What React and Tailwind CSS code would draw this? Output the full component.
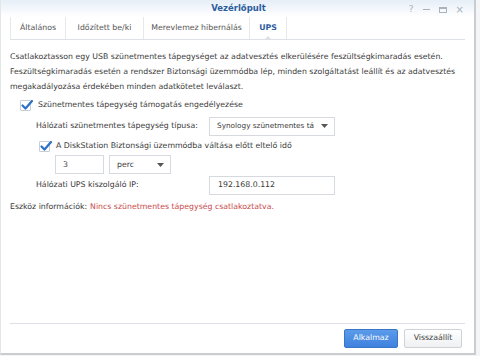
import React from 'react';

const font = { fontFamily: '"DejaVu Sans", Verdana, sans-serif' };

const Check = () => (
  <span className="w-[11px] h-[11px] border border-[#c8ced6] bg-white rounded-[1px] relative inline-block shrink-0">
    <svg className="absolute -left-[1px] -top-[3px]" width="14" height="14" viewBox="0 0 14 14">
      <path d="M2.5 7.5 L5.5 10.5 L12 3" fill="none" stroke="#2e6fc9" strokeWidth="2.2" strokeLinecap="round" strokeLinejoin="round" />
    </svg>
  </span>
);

const Caret = () => (
  <svg className="shrink-0" width="7" height="4" viewBox="0 0 7 4"><path d="M0 0 H7 L3.5 4 Z" fill="#555" /></svg>
);

const App = () => {
  return (
    <div className="w-[480px] h-[356px] bg-[#f4f5f6] text-[7.8px] text-[#3a3a3a] whitespace-nowrap" style={font}>
      <div className="w-[476px] h-[355px] bg-white border-r-2 border-b-2 border-[#c9ccd0] border-l border-l-[#e4e6e8] flex flex-col">
        {/* title bar */}
        <div className="h-[17px] bg-gradient-to-b from-[#e6eef7] to-white relative flex items-center justify-center">
          <span className="text-[#2c5c9e] font-bold text-[8.5px] ml-[2px]">Vezérlőpult</span>
          <div className="absolute right-[10px] top-[3px] flex items-center gap-[9px] text-[#a9b2bd]">
            <span className="text-[9px]">?</span>
            <span className="w-[7px] h-[1px] bg-[#a9b2bd]"></span>
            <span className="w-[8px] h-[6px] border border-[#a9b2bd] border-t-2"></span>
            <span className="text-[10px] leading-none">×</span>
          </div>
        </div>

        {/* tabs */}
        <div className="mx-[9px] h-[23px] border-b border-[#dde1e5] flex items-stretch text-[#555] relative">
          <div className="w-[55px] border-l border-[#e6e9ec] flex items-center justify-center">Általános</div>
          <div className="w-[78px] border-l border-[#e6e9ec] flex items-center justify-center">Időzített be/ki</div>
          <div className="w-[106px] border-l border-[#e6e9ec] flex items-center justify-center">Merevlemez hibernálás</div>
          <div className="w-[38px] border-l border-r border-[#e6e9ec] flex items-center justify-center text-[#2c5c9e] font-bold relative">
            UPS
            <span className="absolute -bottom-[1px] left-1/2 -translate-x-1/2 w-0 h-0 border-l-[4px] border-r-[4px] border-b-[4px] border-l-transparent border-r-transparent border-b-[#dde1e5]"></span>
          </div>
        </div>

        {/* content */}
        <div className="px-[9px] pt-[9px] flex-1 flex flex-col">
          <p className="leading-[15px]">
            Csatlakoztasson egy USB szünetmentes tápegységet az adatvesztés elkerülésére feszültségkimaradás esetén.
            <br />
            Feszültségkimaradás esetén a rendszer Biztonsági üzemmódba lép, minden szolgáltatást leállít és az adatvesztés
            <br />
            megakadályozása érdekében minden adatkötetet leválaszt.
          </p>

          <div className="flex items-center gap-[7px] ml-[10px] mt-[4px] h-[14px]">
            <Check />
            <span>Szünetmentes tápegység támogatás engedélyezése</span>
          </div>

          <div className="flex items-center ml-[26px] mt-[4px] h-[20px]">
            <span className="w-[173px]">Hálózati szünetmentes tápegység típusa:</span>
            <div className="w-[126px] h-[19px] border border-[#d6dade] flex items-center justify-between pl-[7px] pr-[6px] overflow-hidden text-[7.3px]">
              <span>Synology szünetmentes tá</span>
              <Caret />
            </div>
          </div>

          <div className="flex items-center gap-[6px] ml-[29px] mt-[3px] h-[14px]">
            <Check />
            <span>A DiskStation Biztonsági üzemmódba váltása előtt eltelő idő</span>
          </div>

          <div className="flex items-center gap-[5px] ml-[45px] mt-[2px]">
            <div className="w-[49px] h-[19px] border border-[#d6dade] flex items-center pl-[7px]">3</div>
            <div className="w-[62px] h-[19px] border border-[#d6dade] flex items-center justify-between pl-[7px] pr-[6px]">
              <span>perc</span>
              <Caret />
            </div>
          </div>

          <div className="flex items-center ml-[26px] mt-[1px] h-[20px]">
            <span className="w-[173px]">Hálózati UPS kiszolgáló IP:</span>
            <div className="w-[126px] h-[19px] border border-[#d6dade] flex items-center pl-[8px]">192.168.0.112</div>
          </div>

          <div className="mt-[5px] h-[14px] flex items-center">
            <span>Eszköz információk:</span>
            <span className="text-[#c84b4b] ml-[3px]">Nincs szünetmentes tápegység csatlakoztatva.</span>
          </div>
        </div>

        {/* footer */}
        <div className="mx-[9px] border-t border-[#dde1e5] h-[29px] flex items-center justify-end gap-[6px] pr-[3px] mb-[1px]">
          <button className="w-[54px] h-[19px] bg-gradient-to-b from-[#5b9bea] to-[#3f82de] border border-[#3a76c8] text-white rounded-[2px] text-[7.8px]" style={font}>Alkalmaz</button>
          <button className="w-[58px] h-[19px] bg-gradient-to-b from-white to-[#eef0f2] border border-[#cfd3d8] text-[#444] rounded-[2px] text-[7.8px]" style={font}>Visszaállít</button>
        </div>
      </div>
    </div>
  );
};

export default App;
